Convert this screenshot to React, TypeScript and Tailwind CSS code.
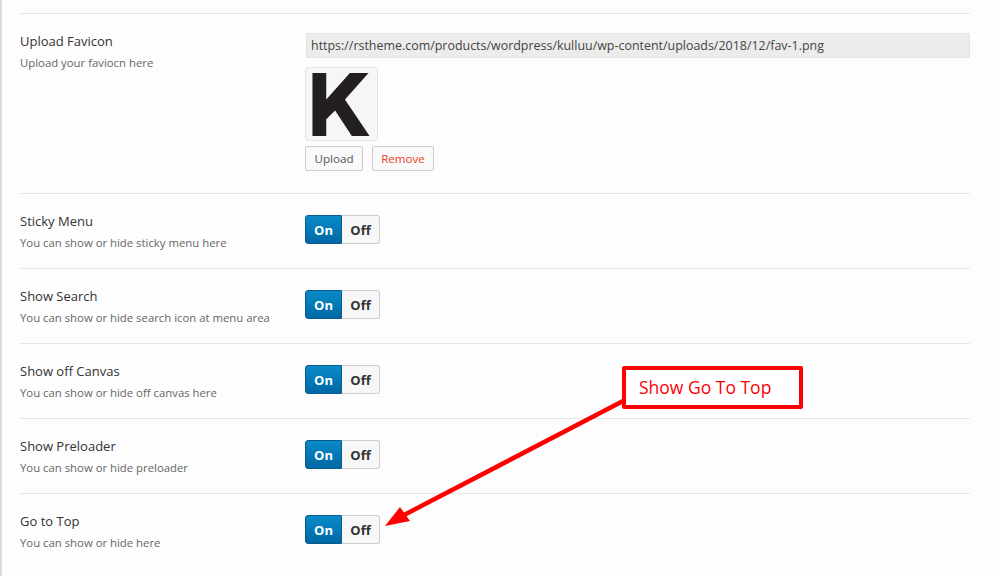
import React from 'react'

const font = { sans: "font-['Open_Sans',sans-serif]" }

const toggles = [
  { label: 'Sticky Menu', hint: 'You can show or hide sticky menu here' },
  { label: 'Show Search', hint: 'You can show or hide search icon at menu area' },
  { label: 'Show off Canvas', hint: 'You can show or hide off canvas here' },
  { label: 'Show Preloader', hint: 'You can show or hide preloader' },
  { label: 'Go to Top', hint: 'You can show or hide here' },
]

const Label = ({ label, hint }: { label: string; hint: string }) => (
  <div className="w-[285px] shrink-0">
    <div className="-mt-[2px] text-[13px] leading-[18px] text-[#333]">{label}</div>
    <div className="mt-[4px] text-[11.35px] leading-[18px] text-[#666]">{hint}</div>
  </div>
)

const Toggle = () => (
  <div className="flex h-[29px] w-[75px] text-[13px] font-bold leading-[29px]">
    <span className="w-[37px] rounded-l-[3px] border border-[#0a5a8c] bg-gradient-to-b from-[#0a8bc8] to-[#0068a5] text-center text-white">
      On
    </span>
    <span className="w-[38px] rounded-r-[3px] border border-l-0 border-[#ccc] bg-[#f7f7f7] text-center text-[#333]">
      Off
    </span>
  </div>
)

const App = () => {
  return (
    <div className={`relative h-[576px] w-[994px] overflow-hidden border-l-2 border-[#dcdcdc] bg-[#fdfdfd] pl-[18px] pr-[24px] pt-[13px] ${font.sans}`}>
      <section className="flex h-[180px] border-t border-[#e7e7e7] pt-[19px]">
        <div className="pt-px"><Label label="Upload Favicon" hint="Upload your faviocn here" /></div>
        <div className="flex flex-1 flex-col">
          <div className="ml-px h-[25px] border border-[#e3e3e3] bg-[#ececec] pl-[4px] text-[12.45px] leading-[23px] text-[#444]">
            https://rstheme.com/products/wordpress/kulluu/wp-content/uploads/2018/12/fav-1.png
          </div>
          <div className="mt-[9px] flex h-[74px] w-[73px] items-center justify-center rounded-[3px] border border-[#e3e3e3] bg-[#f6f6f6]">
            <svg className="-ml-px" width="60" height="63" viewBox="0 0 60 64" aria-hidden="true">
              <path d="M1 0h14v27L39 0h19L34 27l25 37H41L24 38l-9 9v17H1z" fill="#231f20" />
            </svg>
          </div>
          <div className="mt-[5px] flex gap-[9px] text-[11.6px] leading-[21px]">
            <button className="h-[25px] w-[58px] rounded-[2px] border border-[#ccc] bg-[#f9f9f9] text-[#555]">Upload</button>
            <button className="h-[25px] w-[62px] rounded-[2px] border border-[#ccc] bg-[#f9f9f9] text-[#e8431f]">Remove</button>
          </div>
        </div>
      </section>

      {toggles.map(({ label, hint }) => (
        <section key={label} className="flex h-[75px] border-t border-[#e7e7e7] pt-[20px]">
          <Label label={label} hint={hint} />
          <div className="mt-px"><Toggle /></div>
        </section>
      ))}

      {/* annotation laid over the form */}
      <div className="absolute left-[620px] top-[366px] flex h-[43px] w-[181px] items-center rounded-[2px] border-[4px] border-[#fe0000] bg-white pl-[15px] text-[17.5px] text-[#fe0000]">
        <span className="-ml-[2px]">Show Go To Top</span>
      </div>
      <svg className="absolute left-0 top-0" width="994" height="576" viewBox="0 0 994 576" aria-hidden="true">
        <path d="M623 400L402 515" stroke="#fe0000" strokeWidth="4.5" fill="none" />
        <path d="M383 526L398 507L408 521z" fill="#fe0000" />
      </svg>
    </div>
  )
}

export default App
